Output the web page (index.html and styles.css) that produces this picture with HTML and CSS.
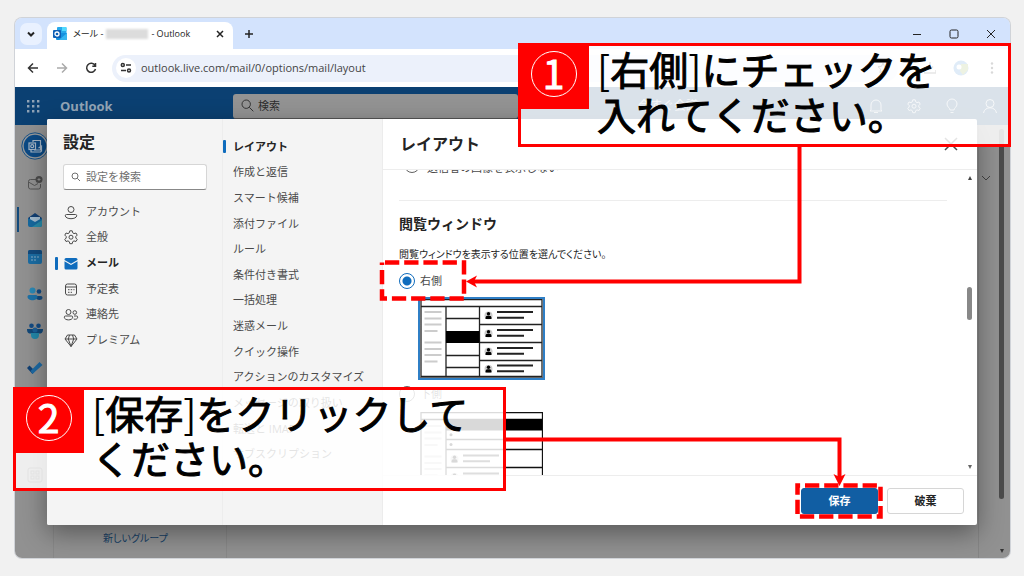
FILE: index.html
```html
<!DOCTYPE html>
<html lang="ja">
<head>
<meta charset="utf-8">
<meta name="viewport" content="width=device-width, initial-scale=1">
<title>Outlook レイアウト設定</title>
<link rel="stylesheet" href="styles.css">
</head>
<body>
<div class="browser">
  <div class="tabstrip">
    <button class="tab-menu" aria-label="タブを検索"><svg width="12" height="12" viewBox="0 0 12 12"><path class="ln bold" d="M3 4.500 6 7.500 9 4.500"/></svg></button>
    <div class="tab">
      <svg width="14" height="14" viewBox="0 0 14 14"><rect x="4" y="0" width="9.500" height="8" rx="1" fill="#28a8ea"/><path d="M9 0h3.500a1 1 0 0 1 1 1v3H9z" fill="#50d9ff"/><path d="M3 6h11v6a1 1 0 0 1-1 1H4a1 1 0 0 1-1-1z" fill="#1490df"/><path d="M14 6v6a1 1 0 0 1-1 1H6z" fill="#36b5f0"/><rect x="0" y="3" width="8" height="8" rx="1" fill="#0f5fb5"/><circle cx="4" cy="7" r="2" fill="none" stroke="#fff" stroke-width="1.300"/></svg>
      <span class="tab-title">メール - <span class="redacted"></span> - Outlook</span>
      <button class="tab-close" aria-label="タブを閉じる"><svg width="10" height="10" viewBox="0 0 10 10"><path class="ln mid" d="M2 2l6 6M8 2l-6 6"/></svg></button>
    </div>
    <button class="new-tab" aria-label="新しいタブ"><svg width="10" height="10" viewBox="0 0 10 10"><path class="ln mid" d="M5 1v8M1 5h8"/></svg></button>
    <div class="window-controls">
      <button aria-label="最小化"><svg width="10" height="10" viewBox="0 0 10 10"><path class="ln" d="M1 5.500h8"/></svg></button>
      <button aria-label="最大化"><svg width="10" height="10" viewBox="0 0 10 10"><rect class="ln" x="1" y="1" width="8" height="8" rx="1.500"/></svg></button>
      <button aria-label="閉じる"><svg width="10" height="10" viewBox="0 0 10 10"><path class="ln" d="M1 1l8 8M9 1l-8 8"/></svg></button>
    </div>
  </div>

  <div class="toolbar">
    <button aria-label="戻る"><svg width="12" height="12" viewBox="0 0 12 12"><path class="ln mid" d="M11 6H1.500M6 1.500 1.500 6 6 10.500"/></svg></button>
    <button class="dim" aria-label="進む"><svg width="12" height="12" viewBox="0 0 12 12"><path class="ln mid" d="M1 6h9.500M6 1.500 10.500 6 6 10.500"/></svg></button>
    <button aria-label="再読み込み"><svg width="12" height="12" viewBox="0 0 12 12"><path class="ln mid" d="M10 3.500A4.500 4.500 0 1 0 10.500 7M10.500 1v3.200H7.300"/></svg></button>
    <div class="address">
      <span class="site-info"><svg width="12" height="12" viewBox="0 0 12 12"><circle class="ln mid" cx="2.800" cy="3" r="1.500"/><path class="ln mid" d="M6 3h5M1 8.500h5"/><circle class="ln mid" cx="9" cy="8.500" r="1.500"/></svg></span>
      <input class="url" aria-label="アドレス" value="outlook.live.com/mail/0/options/mail/layout">
      <svg width="12" height="12" viewBox="0 0 12 12"><path class="ln" d="M6 1l1.500 3.300 3.500.4-2.600 2.400.7 3.600L6 8.900l-3.100 1.800.7-3.600L1 4.700l3.500-.4z"/></svg>
    </div>
    <svg class="tool" width="12" height="12" viewBox="0 0 12 12"><path class="ln mid" d="M6 0v7M3 4.500l3 3 3-3M0 8v3h12V8"/></svg>
    <svg class="tool" width="16" height="16" viewBox="0 0 16 16"><circle cx="8" cy="8" r="7.500" fill="#2f80d0"/><path d="M8 4h7v6l-5 5-3-4z" fill="#88a840"/><circle cx="6" cy="7" r="2.500" fill="#fff"/></svg>
    <svg class="tool" width="12" height="12" viewBox="0 0 12 12"><circle cx="6" cy="1.500" r="1.200"/><circle cx="6" cy="6" r="1.200"/><circle cx="6" cy="10.500" r="1.200"/></svg>
  </div>

  <div class="app">
    <header class="app-header">
      <svg width="13" height="13" viewBox="0 0 13 13" fill="#8fa2b5"><path d="M0 0h2.400v2.400H0zM5 0h2.400v2.400H5zM10 0h2.400v2.400H10zM0 5h2.400v2.400H0zM5 5h2.400v2.400H5zM10 5h2.400v2.400H10zM0 10h2.400v2.400H0zM5 10h2.400v2.400H5zM10 10h2.400v2.400H10z"/></svg>
      <strong class="brand">Outlook</strong>
      <label class="app-search"><svg width="13" height="13" viewBox="0 0 13 13"><circle class="ln" cx="5.200" cy="5.200" r="4.200"/><path class="ln" d="M8.300 8.300l4 4"/></svg><input aria-label="検索" placeholder="検索"></label>
      <span class="meet">今すぐ会議</span>
      <svg width="16" height="16" viewBox="0 0 16 16"><path class="ln" d="M3 12V7a5 5 0 0 1 10 0v5l1 1H2zM6 14.500h4"/></svg>
      <svg width="16" height="16" viewBox="0 0 16 16"><use href="#gear"/></svg>
      <svg width="16" height="16" viewBox="0 0 16 16"><path class="ln" d="M6 12c0-2-3-3-3-6a5 5 0 0 1 10 0c0 3-3 4-3 6zM6.500 14.500h3"/></svg>
      <svg width="16" height="16" viewBox="0 0 16 16"><circle class="ln" cx="8" cy="5.500" r="4"/><path class="ln" d="M1.500 15c1-7 12-7 13 0"/></svg>
    </header>
    <div class="app-body">
      <nav class="rail" aria-label="アプリ">
        <a href="#" class="rail-item" aria-label="アカウント"><svg width="28" height="28" viewBox="0 0 28 28"><circle cx="14" cy="14" r="13.200" fill="#9b9b9b" stroke="#185287"/><circle cx="14" cy="14" r="11.300" fill="#0c4a85"/><g fill="none" stroke="#a5b6c7" stroke-width="1.200"><path d="M12 10V8.500h7.500V18H13M10 18v2h9.500l1-1v-5l-3 2"/><rect x="8" y="11" width="6.500" height="6.500"/><circle cx="11.200" cy="14.200" r="1.500"/></g></svg></a>
        <a href="#" class="rail-item" aria-label="新着"><svg width="16" height="16" viewBox="0 0 16 16"><path d="M9 4.500H3.500a2 2 0 0 0-2 2V12a2 2 0 0 0 2 2h8a2 2 0 0 0 2-2V9M1.500 7l6 3.500L11 8.500" fill="none" stroke="#555"/><circle cx="12" cy="4.500" r="3.500" fill="#4c4c4c"/><path d="M12 3v3M10.500 4.500h3" stroke="#999" stroke-width=".8"/></svg></a>
        <a href="#" class="rail-item current" aria-label="メール"><svg width="16" height="16" viewBox="0 0 16 16"><path d="M1 6l7-5 7 5v3H1z" fill="#123f73"/><path d="M3 5h10v5H3z" fill="#a3bccf"/><path d="M1 6l7 4 7-4v7a2 2 0 0 1-2 2H3a2 2 0 0 1-2-2z" fill="#16699f"/><path d="M5 15l10-7v5a2 2 0 0 1-2 2z" fill="#288ba9"/></svg></a>
        <a href="#" class="rail-item" aria-label="予定表"><svg width="16" height="16" viewBox="0 0 16 16"><rect x="1" y="1" width="14" height="14" rx="2" fill="#1b6da4"/><path d="M1 5V3a2 2 0 0 1 2-2h10a2 2 0 0 1 2 2v2z" fill="#134b7e"/><g fill="#9ab6ca"><circle cx="5" cy="8" r=".8"/><circle cx="8" cy="8" r=".8"/><circle cx="11" cy="8" r=".8"/><circle cx="5" cy="11" r=".8"/><circle cx="8" cy="11" r=".8"/></g></svg></a>
        <a href="#" class="rail-item" aria-label="連絡先"><svg width="16" height="16" viewBox="0 0 16 16"><circle cx="5.500" cy="4.500" r="3" fill="#2a88b5"/><circle cx="12" cy="5.500" r="2.300" fill="#114b84"/><path d="M9 10h5a1.500 1.500 0 0 1 1.500 1.500c0 3-4 3-6 1.500z" fill="#124b80"/><path d="M2 9h7a1.500 1.500 0 0 1 1.500 1.500c0 5-10 5-10 0A1.500 1.500 0 0 1 2 9z" fill="#1d72a8"/></svg></a>
        <a href="#" class="rail-item" aria-label="グループ"><svg width="16" height="16" viewBox="0 0 16 16"><circle cx="4.500" cy="2.800" r="2.300" fill="#124b84"/><circle cx="11.500" cy="2.800" r="2.300" fill="#124b84"/><path d="M0 6h16c0 5-3 5-5 4H5C3 11 0 11 0 6z" fill="#124878"/><circle cx="8" cy="7" r="2.500" fill="#1b5f98"/><path d="M4 10h8v2a4 4 0 0 1-8 0z" fill="#2387a8"/></svg></a>
        <a href="#" class="rail-item" aria-label="To Do"><svg width="16" height="16" viewBox="0 0 16 16"><path d="M0 8l2.500-2.500L8 11l-2.500 3z" fill="#103f73"/><path d="M5.500 14 3.500 11 12.500 2 15.500 5z" fill="#1d6aa4"/></svg></a>
        <a href="#" class="rail-item apps" aria-label="その他"><svg width="16" height="16" viewBox="0 0 16 16" fill="none" stroke="#444"><rect x="1" y="1" width="14" height="14" rx="2"/><rect x="4" y="4" width="3" height="3"/><rect x="9" y="4" width="3" height="3"/><rect x="4" y="9" width="3" height="3"/><rect x="9" y="9" width="3" height="3"/></svg></a>
      </nav>
      <div class="folders"><a href="#" class="palt">新しいグループ</a></div>
      <div class="reading"></div>
      <div class="edge">
        <svg width="10" height="10" viewBox="0 0 10 10"><path class="ln" d="M1 3l4 4 4-4"/></svg>
        <div class="page-scroll"><i></i><svg width="4" height="4" viewBox="0 0 4 4"><path d="M0 0h4L2 4z" fill="#333"/></svg></div>
      </div>
    </div>

    <section class="dialog" role="dialog" aria-labelledby="dlg-title">
      <div class="side">
        <h1 id="dlg-title">設定</h1>
        <label class="find"><svg width="10" height="10" viewBox="0 0 10 10"><circle class="ln" cx="4" cy="4" r="3"/><path class="ln" d="M6.300 6.300 9 9"/></svg><input aria-label="設定を検索" placeholder="設定を検索"></label>
        <nav class="categories">
          <a href="#"><svg width="16" height="16" viewBox="0 0 16 16"><circle class="ln" cx="8" cy="5.500" r="3"/><path class="ln" d="M3.500 10.500h9a1.200 1.200 0 0 1 1.200 1.200c0 4-11.400 4-11.400 0a1.200 1.200 0 0 1 1.200-1.200z"/></svg>アカウント</a>
          <a href="#"><svg width="16" height="16" viewBox="0 0 16 16"><g id="gear"><path class="ln" d="M6.800 1.800h2.400l.5 2 1.300.8 2-.6 1.200 2.100L12.800 7.500v1.500l1.400 1.400-1.200 2.100-2-.6-1.300.8-.5 2H6.800l-.5-2-1.300-.8-2 .6-1.200-2.100L3.200 9V7.500L1.800 6.100 3 4l2 .6 1.300-.8z"/><circle class="ln" cx="8" cy="8.200" r="2"/></g></svg>全般</a>
          <a href="#" class="current"><svg width="16" height="16" viewBox="0 0 16 16"><path d="M1.500 5V4.500a1.500 1.500 0 0 1 1.500-1.500h10a1.500 1.500 0 0 1 1.500 1.500V5L8 8.800zM1.500 6.200 8 10l6.500-3.800V13a1.500 1.500 0 0 1-1.500 1.500H3A1.500 1.500 0 0 1 1.500 13z" fill="#0f6cbd"/></svg>メール</a>
          <a href="#"><svg width="16" height="16" viewBox="0 0 16 16"><rect class="ln" x="2.500" y="3" width="11" height="11" rx="2"/><path class="ln" d="M2.500 6h11"/><path class="ln" stroke-dasharray="1.500 1.200" d="M5 8.700h6.500M5 11.300h4"/></svg>予定表</a>
          <a href="#"><svg width="16" height="16" viewBox="0 0 16 16"><circle class="ln" cx="5.500" cy="6" r="2.500"/><circle class="ln" cx="11.800" cy="6.500" r="1.800"/><path class="ln" d="M2.500 10h6a1.200 1.200 0 0 1 1.200 1.200c0 3.600-8.400 3.600-8.400 0A1.200 1.200 0 0 1 2.500 10zM11 10h2.500a1.200 1.200 0 0 1 1.200 1.200c0 1.800-2 2.400-4 1.900"/></svg>連絡先</a>
          <a href="#"><svg width="16" height="16" viewBox="0 0 16 16"><path class="ln" d="M4.500 3h7L14 7l-6 7.500L2 7zM2 7h12M6.500 3 5.300 7 8 14.500 10.700 7 9.500 3"/></svg>プレミアム</a>
        </nav>
      </div>
      <nav class="sections">
        <a href="#" class="current">レイアウト</a>
        <a href="#">作成と返信</a>
        <a href="#">スマート候補</a>
        <a href="#">添付ファイル</a>
        <a href="#">ルール</a>
        <a href="#">条件付き書式</a>
        <a href="#">一括処理</a>
        <a href="#">迷惑メール</a>
        <a href="#">クイック操作</a>
        <a href="#">アクションのカスタマイズ</a>
        <a href="#">メッセージの取り扱い</a>
        <a href="#">転送と IMAP</a>
        <a href="#">サブスクリプション</a>
      </nav>
      <div class="panel">
        <div class="panel-head">
          <h2>レイアウト</h2>
          <button class="close" aria-label="閉じる"><svg width="16" height="16" viewBox="0 0 16 16"><path class="ln mid" d="M2 2l12 12M14 2 2 14"/></svg></button>
        </div>
        <div class="panel-body">
          <form class="content">
            <label class="choice above"><input type="radio" name="img">送信者の画像を表示しない</label>
            <hr>
            <h3>閲覧ウィンドウ</h3>
            <p class="palt">閲覧ウィンドウを表示する位置を選んでください。</p>
            <div class="option">
              <label class="choice"><input type="radio" name="pane" checked>右側</label>
              <div class="thumb picked">
                <svg width="123" height="79" viewBox="0 0 123 79">
                  <defs>
                    <g id="mail"><circle cx="3.500" cy="4" r="4" fill="#ccc"/><circle cx="3.500" cy="2.300" r="1.700"/><path d="M.5 7.500V6.200a2 2 0 0 1 2-2h2a2 2 0 0 1 2 2v1.300z"/><path d="M12 .5h36M12 6.300h27" stroke="#222" stroke-width="2"/></g>
                    <path id="folders" d="M4.500 0h17M4.500 6.500h17M4.500 12.500h17M4.500 19h13M4.500 30.500h17M4.500 37h17M4.500 43h17M4.500 49.500h13" stroke="#ccc" stroke-width="1.800"/>
                  </defs>
                  <rect y="78" width="123" height="1" fill="#777"/>
                  <path d="M1 .5h121v77H1zM1 7.500h121M26 7.500v70M59.500 7.500v70M26 19.500h33M26 56.500h33M26 68.500h33M59.500 25.500h62M59.500 43.500h62M59.500 61.500h62" fill="none" stroke="#222" stroke-width="1.300"/>
                  <path d="M26 32h33.500v12H26z"/>
                  <use href="#folders" y="13"/>
                  <use href="#mail" x="65" y="12.500"/><use href="#mail" x="65" y="30.500"/><use href="#mail" x="65" y="48.500"/><use href="#mail" x="65" y="66"/>
                </svg>
              </div>
            </div>
            <div class="option">
              <label class="choice"><input type="radio" name="pane">下側</label>
              <div class="thumb">
                <svg width="123" height="79" viewBox="0 0 123 79">
                  <path d="M1 .7h121.500v77H1zM1 7.500h121M26 7.500v70M26 27.500h96M26 37.500h96M26 55.500h96" fill="none" stroke="#111" stroke-width="1.300"/>
                  <path d="M26 7h96v11.500H26z"/>
                  <circle cx="31" cy="22.700" r="1.500"/><circle cx="31" cy="32.500" r="1.500"/>
                  <use href="#folders" y="14"/>
                  <use href="#mail" x="31" y="43"/><use href="#mail" x="31" y="61"/>
                </svg>
              </div>
            </div>
          </form>
          <div class="scrollbar"><svg width="4" height="4" viewBox="0 0 4 4"><path d="M0 4h4L2 0z" fill="#444"/></svg><i></i><svg width="4" height="4" viewBox="0 0 4 4"><path d="M0 0h4L2 4z" fill="#666"/></svg></div>
        </div>
        <div class="panel-foot">
          <button class="btn primary">保存</button>
          <button class="btn">破棄</button>
        </div>
      </div>
    </section>
  </div>
</div>

<svg class="pointers" viewBox="0 0 1024 576" preserveAspectRatio="none">
  <g fill="none" stroke="#f00">
    <path d="M799.500 146V281.500H472M504 439.500H839.500V478" stroke-width="4"/>
    <path d="M382 262.500H464V298.500H382z" stroke-width="4.500" stroke-dasharray="14.300 4.900" stroke-dashoffset="-3"/>
    <path d="M797.500 485.500H880.500V516.500H797.500z" stroke-width="4.500" stroke-dasharray="14.300 4.900" stroke-dashoffset="-7.500"/>
  </g>
  <path d="M466 281.500l11-6-3 6 3 6zM839.500 486l-6-12 6 3 6-3z" fill="#f00"/>
</svg>
<aside class="callout first"><span class="badge"><b>1</b></span><span class="thin">[</span>右側<span class="thin">]</span>にチェックを<br>入れてください。</aside>
<aside class="callout second"><span class="badge"><b>2</b></span><span class="thin">[</span>保存<span class="thin">]</span>をクリックして<br>ください。</aside>
</body>
</html>
```
FILE: styles.css
```css
* { box-sizing: border-box; }
body {
  margin: 0;
  min-height: 100vh;
  padding: 18px 14px 18px 15px;
  display: flex;
  position: relative;
  background: #f1f1f1;
  color: #242424;
  font: 11px/20px "Open Sans", "Noto Sans CJK JP", sans-serif;
}
button, input { font: inherit; color: inherit; margin: 0; }
button { border: 0; padding: 0; background: none; display: grid; place-items: center; }
input { border: 0; padding: 0; background: none; min-width: 0; outline: 0; }
a { color: inherit; text-decoration: none; }
h1, h2, h3, p { margin: 0; }
svg { display: block; flex: none; }
.ln { fill: none; stroke: currentColor; stroke-width: 1; }
.ln.mid { stroke-width: 1.5; }
.ln.bold { stroke-width: 2; }
.palt { font-family: "Noto Sans CJK JP", sans-serif; font-size: 10px; font-feature-settings: "palt"; }

/* browser frame */
.browser {
  flex: 1;
  display: flex;
  flex-direction: column;
  overflow: hidden;
  border-radius: 7px;
  box-shadow: 0 0 0 1px #d0d3d8;
}
.tabstrip { display: flex; align-items: center; height: 31px; padding: 0 14px 0 5px; background: #d3e3fd; }
.tab-menu { width: 22px; height: 22px; border-radius: 7px; background: #e9f1ff; }
.tab {
  display: flex;
  align-items: center;
  align-self: flex-end;
  gap: 6px;
  width: 186px;
  height: 27px;
  margin-left: 5px;
  padding: 0 8px 3px 6px;
  border-radius: 8px 8px 0 0;
  background: #fff;
}
.tab-title { flex: 1; display: flex; align-items: center; gap: 3px; white-space: nowrap; font: 9px/20px "Open Sans", "Noto Sans CJK JP", sans-serif; font-feature-settings: "palt"; }
.redacted { width: 42px; height: 10px; background: #dcdcdc; filter: blur(1px); }
.tab-close { width: 10px; height: 10px; }
.new-tab { margin-left: 11px; }
.window-controls { display: flex; gap: 27px; margin-left: auto; }

.toolbar { display: flex; align-items: center; gap: 17px; height: 38px; padding: 0 12px; background: #fff; color: #333; }
.toolbar .dim { color: #aaa; }
.address { flex: 1; display: flex; align-items: center; gap: 5px; height: 27px; margin: 0 9px 0 -2px; padding: 0 9px 0 4px; border-radius: 14px; background: #ecf1fb; }
.site-info { display: grid; place-items: center; width: 20px; height: 20px; border-radius: 50%; background: #fff; }
.url { flex: 1; color: #444; }
.tool { color: #555; }

/* mail app behind the dialog */
.app { flex: 1; display: flex; flex-direction: column; position: relative; background: #919191; }
.app-header { display: flex; align-items: center; gap: 22px; height: 38px; padding: 0 12px; background: #0b4072; color: #c0ccd8; }
.brand { width: 154px; margin-left: -2px; color: #93a5b6; font-size: 13px; }
.app-search { display: flex; align-items: center; gap: 4px; width: 285px; height: 25px; margin-left: -3px; padding: 0 8px; border-bottom: 1px solid #555; border-radius: 3px; background: #939393; color: #333; }
.app-search input { flex: 1; }
.app-search input::placeholder { color: #2d2d2d; opacity: 1; }
.meet { flex: 1; margin-left: 98px; font-size: 12px; }
.app-body { flex: 1; display: flex; }
.rail { display: flex; flex-direction: column; width: 39px; padding: 2px 0 65px; border-right: 1px solid #888; }
.rail-item { display: grid; place-items: center; height: 37px; border-left: 2px solid transparent; position: relative; }
.rail-item.current::before { content: ""; position: absolute; left: 0; top: 6px; width: 2px; height: 25px; background: #124a7c; }
.apps { margin-top: auto; }
.folders { display: flex; align-items: flex-end; width: 173px; padding: 0 0 10px 49px; border-right: 1px solid #888; color: #164066; }
.reading { flex: 1; }
.edge { display: flex; justify-content: space-between; width: 32px; padding: 4px 6px 5px 2px; border-left: 1px solid #858585; color: #444; }
.edge > svg { margin-top: 44px; }
.page-scroll { display: flex; flex-direction: column; align-items: center; gap: 50px; }
.page-scroll i { flex: 1; width: 5px; border-radius: 3px; background: #4b4b4b; }

/* settings dialog */
.dialog {
  position: absolute;
  inset: 32px 33px 33px 32px;
  display: flex;
  overflow: hidden;
  border-radius: 2px;
  background: #fff;
  box-shadow: 0 8px 26px rgba(0, 0, 0, .4);
  color: #4a4a4a;
}
.side { width: 176px; padding: 11px 15px 11px 16px; background: #f4f4f4; border-right: 1px solid #ededed; }
h1, h2 { font-size: 16px; line-height: 24px; font-weight: 700; color: #242424; }
.find { display: flex; align-items: center; gap: 5px; height: 26px; margin: 10px 0 9px; padding: 0 7px; border: 1px solid #d6d6d6; border-bottom-color: #888; border-radius: 3px; background: #fff; color: #707070; }
.find input { flex: 1; }
.find input::placeholder { color: #707070; opacity: 1; }
.categories { display: grid; grid-auto-rows: 1fr; height: 154px; }
.categories a { display: flex; align-items: center; gap: 7px; position: relative; }
.current { font-weight: 700; color: #242424; }
.categories .current::before, .sections .current::before { content: ""; position: absolute; left: -8px; width: 3px; height: 13px; border-radius: 1px; background: #0f6cbd; }
.sections { display: grid; grid-auto-rows: 1fr; width: 160px; padding: 15px 0 58px 10px; background: #f4f4f4; border-right: 1px solid #ececec; }
.sections a { display: flex; align-items: center; position: relative; white-space: nowrap; }
.sections .current::before { left: -10px; }
.panel { flex: 1; display: flex; flex-direction: column; min-width: 0; }
.panel-head { display: flex; align-items: center; justify-content: space-between; height: 51px; padding: 0 18px 0 17px; border-bottom: 1px solid #ededed; }
.panel-body { flex: 1; display: flex; min-height: 0; overflow: hidden; }
.content { flex: 1; height: 0; padding: 0 15px 0 16px; }
.choice { display: flex; align-items: center; gap: 5px; height: 22px; }
.choice input { appearance: none; width: 16px; height: 16px; border: 1px solid #616161; border-radius: 50%; }
.choice input:checked { border-color: #0f6cbd; background: radial-gradient(#0f6cbd 4px, transparent 5px); }
.above { align-items: flex-end; gap: 7px; height: 20px; margin-top: -12px; }
.above input { margin: 0 0 5px 5px; }
hr { height: 1px; margin: 22px 0 13px; border: 0; background: #ededed; }
h3 { font-size: 14px; line-height: 20px; color: #242424; }
.content p { margin: 10px 0 6px; color: #242424; }
.option { display: grid; gap: 5px; margin-bottom: 3px; }
.thumb { width: 127px; margin-left: 19px; border: 2px solid transparent; }
.picked { border-color: #2f7fc6; }
.scrollbar { display: flex; flex-direction: column; align-items: center; justify-content: space-between; width: 15px; padding: 6px 0; }
.scrollbar i { width: 5px; height: 33px; margin-bottom: 38px; border-radius: 3px; background: #888; }
.panel-foot { display: flex; justify-content: flex-end; align-items: center; gap: 9px; height: 50px; padding-right: 13px; border-top: 1px solid #ededed; }
.btn { width: 77px; height: 26px; border: 1px solid #d6d6d6; border-radius: 3px; background: #fff; color: #242424; font-weight: 700; }
.primary { border-color: #115ea3; background: #115ea3; color: #fff; }

/* instruction overlays */
.pointers { position: absolute; inset: 0; width: 100%; height: 100%; pointer-events: none; }
.callout {
  position: absolute;
  width: 493px;
  height: 104px;
  padding-left: 76px;
  border: 3px solid #f00;
  background: rgba(255, 255, 255, .85);
  color: #000;
  font: 39px/45px "Noto Sans CJK JP", sans-serif;
  -webkit-text-stroke: 1px currentColor;
  white-space: nowrap;
}
.thin { -webkit-text-stroke: 0; }
.first { top: 43px; right: 13px; }
.second { top: 387px; left: 13px; }
.badge { position: absolute; left: -3px; top: -3px; display: grid; place-items: center; width: 71px; height: 66px; padding-bottom: 4px; background: #f00; color: #fff; }
.badge b { display: grid; place-items: center; width: 46px; height: 46px; padding-bottom: 4px; border: 1px solid #fff; border-radius: 50%; line-height: 38px; font-weight: 400; }
```
